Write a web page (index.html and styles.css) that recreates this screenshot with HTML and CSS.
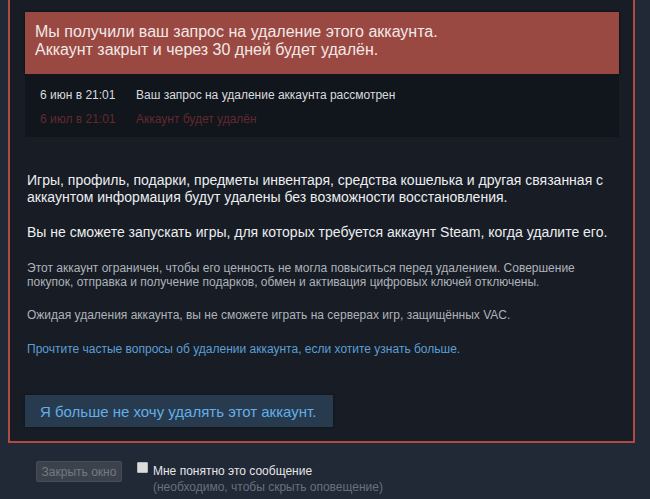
FILE: index.html
```html
<!DOCTYPE html>
<html lang="ru">
<head>
<meta charset="utf-8">
<title>Удаление аккаунта</title>
<link rel="stylesheet" href="styles.css">
</head>
<body>
<div class="modal">
  <div class="banner">Мы получили ваш запрос на удаление этого аккаунта.<br>Аккаунт закрыт и через 30 дней будет удалён.</div>
  <div class="timeline">
    <div class="row"><span class="date">6 июн в 21:01</span><span>Ваш запрос на удаление аккаунта рассмотрен</span></div>
    <div class="row future"><span class="date">6 июл в 21:01</span><span>Аккаунт будет удалён</span></div>
  </div>
  <div class="content">
    <p class="lead first">Игры, профиль, подарки, предметы инвентаря, средства кошелька и другая связанная с аккаунтом информация будут удалены без возможности восстановления.</p>
    <p class="lead">Вы не сможете запускать игры, для которых требуется аккаунт Steam, когда удалите его.</p>
    <p class="note">Этот аккаунт ограничен, чтобы его ценность не могла повыситься перед удалением. Совершение покупок, отправка и получение подарков, обмен и активация цифровых ключей отключены.</p>
    <p class="note">Ожидая удаления аккаунта, вы не сможете играть на серверах игр, защищённых VAC.</p>
    <p class="note last"><a class="link" href="#">Прочтите частые вопросы об удалении аккаунта, если хотите узнать больше.</a></p>
  </div>
  <button class="cancel">Я больше не хочу удалять этот аккаунт.</button>
</div>
<div class="footer">
  <button class="close">Закрыть окно</button>
  <label class="ack">
    <input type="checkbox" class="check">
    <span class="ack-text">Мне понятно это сообщение<br><span class="sub">(необходимо, чтобы скрыть оповещение)</span></span>
  </label>
</div>
</body>
</html>
```

FILE: styles.css
```css
html, body {
  margin: 0;
  padding: 0;
}
body {
  background: #212836;
  font-family: "Liberation Sans", Arial, sans-serif;
  width: 650px;
  height: 499px;
  overflow: hidden;
}
.modal {
  margin-left: 8px;
  width: 594px;
  background: #171c25;
  border: 2px solid #ad4c43;
  border-top: none;
  padding: 12px 14px 14px 15px;
  box-sizing: content-box;
  display: flex;
  flex-direction: column;
  align-items: flex-start;
}
.banner {
  align-self: stretch;
  background: #9a4942;
  color: #f2e8e6;
  font-size: 16px;
  line-height: 18px;
  padding: 11px 10px 15px 10px;
  box-shadow: 0 0 2px #0a0a0a;
}
.timeline {
  align-self: stretch;
  background: #11151c;
  padding: 9px 15px 6px 15px;
  font-size: 12px;
  line-height: 24px;
  color: #d9dcdf;
}
.row {
  display: flex;
}
.date {
  width: 96px;
  flex: none;
}
.future {
  color: #64292e;
}
.content {
  padding: 0 2px;
}
.content p {
  margin: 0;
}
.lead {
  font-size: 14px;
  line-height: 17px;
  color: #eceef0;
  margin-top: 18px !important;
}
.lead.first {
  margin-top: 35px !important;
}
.note {
  font-size: 12px;
  line-height: 14px;
  color: #aeb3b9;
  margin-top: 19px !important;
}
.lead + .note {
  margin-top: 20px !important;
}
.note.last {
  margin-top: 20px !important;
}
.link {
  color: #5b9fd6;
  text-decoration: none;
}
.cancel {
  margin-top: 39px;
  height: 32px;
  width: 308px;
  padding: 0 0 0 15px;
  text-align: left;
  border: none;
  background: #283a4e;
  color: #62aee6;
  font-family: "Liberation Sans", Arial, sans-serif;
  font-size: 15px;
  box-shadow: 0 0 2px #0c1018;
}
.footer {
  display: flex;
  align-items: flex-start;
  padding: 18px 0 0 36px;
}
.close {
  height: 21px;
  width: 86px;
  padding: 0;
  border: 1px solid #474d57;
  border-radius: 2px;
  background: #3c424b;
  color: #747981;
  font-family: "Liberation Sans", Arial, sans-serif;
  font-size: 12px;
}
.ack {
  display: flex;
  align-items: flex-start;
  margin-left: 15px;
  font-size: 12px;
  line-height: 16px;
  color: #e4e6e8;
}
.ack-text {
  padding-top: 2px;
}
.check {
  appearance: none;
  -webkit-appearance: none;
  width: 11px;
  height: 11px;
  margin: 1px 5px 0 0;
  background: #dcdcdc;
  border: 1px solid #b9b9b9;
  box-sizing: border-box;
  border-radius: 1px;
}
.sub {
  color: #69717d;
}
```
